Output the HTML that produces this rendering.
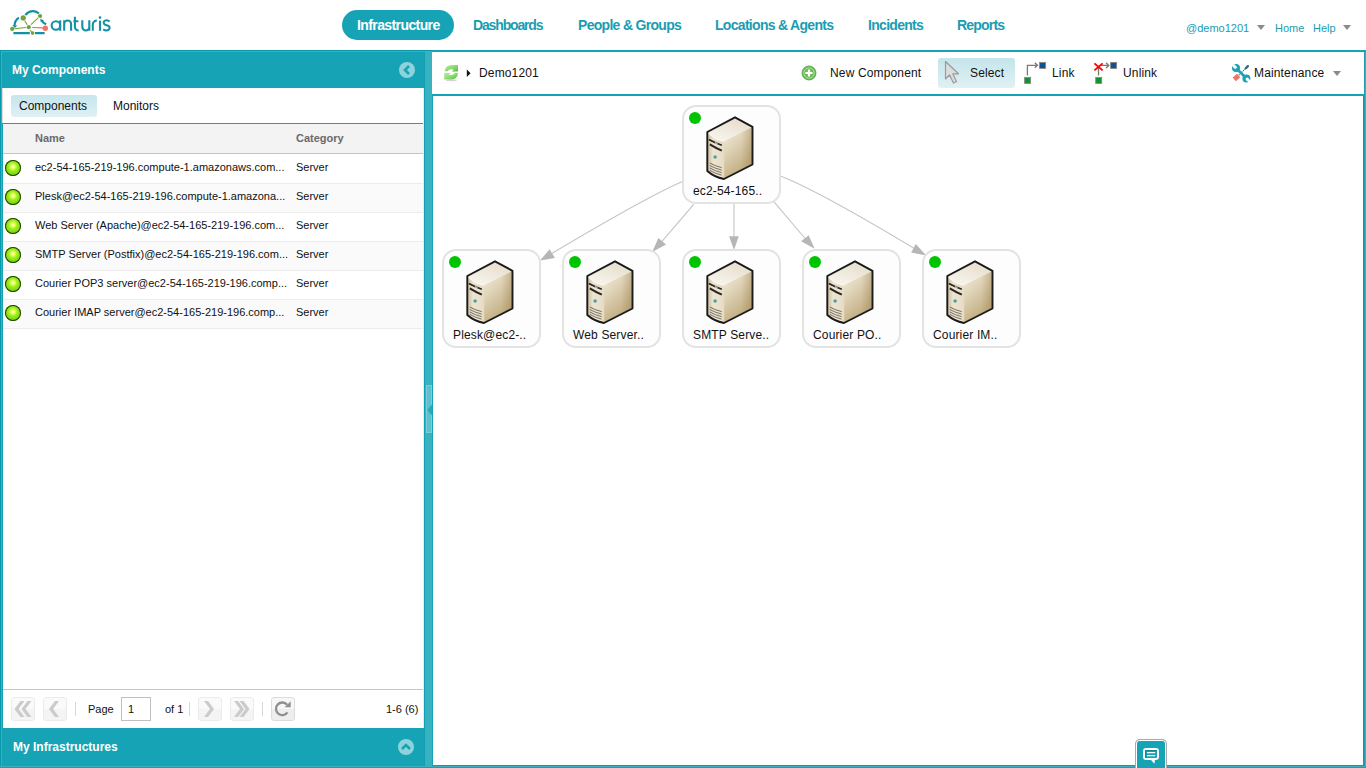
<!DOCTYPE html>
<html><head><meta charset="utf-8">
<style>
*{margin:0;padding:0;box-sizing:border-box}
html,body{width:1366px;height:768px;overflow:hidden;background:#fff;font-family:"Liberation Sans",sans-serif;color:#222}
.a{position:absolute}
.t{position:absolute;white-space:nowrap;line-height:1}
.nav{font-weight:bold;font-size:14px;color:#1a9db2;top:18px;letter-spacing:-0.6px}
.hl{font-size:11px;color:#1a9cb1;top:23px}
.tri{position:absolute;width:0;height:0;border-left:4px solid transparent;border-right:4px solid transparent;border-top:5px solid #8a8a8a}
.teal{background:#16a3b5}
.row{position:absolute;left:3px;width:420px;height:29px;border-bottom:1px solid #ececec}
.row .ball{position:absolute;left:2px;top:5px;width:16px;height:16px;border-radius:50%;
 background:radial-gradient(circle at 50% 42%,#fffbe0 0,#f0ff60 14%,#9cf020 34%,#7ad80e 62%,#4f9a06 86%,#1f3a00 100%);box-shadow:0 0 0 1px #203c00 inset}
.row .nm{position:absolute;left:32px;top:7px;font-size:11px;color:#111;white-space:nowrap;line-height:1}
.row .ct{position:absolute;left:293px;top:7px;font-size:11px;color:#111;line-height:1}
.pbtn{position:absolute;top:697px;width:24px;height:24px;border:1px solid #ebebeb;border-radius:3px;background:linear-gradient(#fafafa 0,#fafafa 50%,#f4f4f4 50%,#f4f4f4 100%)}
.sep{position:absolute;top:702px;width:1px;height:14px;background:#d8d8d8}
.node{position:absolute;width:99px;height:99px;border:2px solid #e3e3e3;border-radius:14px;background:#fdfdfd}
.node .dot{position:absolute;left:5px;top:5px;width:12px;height:12px;border-radius:50%;background:#00c400}
.node svg{position:absolute;left:22px;top:9px}
.node .lb{position:absolute;left:9px;top:78px;text-align:left;letter-spacing:0.15px;font-size:12px;color:#111;line-height:1;white-space:nowrap}
.tb{position:absolute;top:67px;font-size:12px;color:#111;line-height:1;white-space:nowrap;letter-spacing:0.15px}
</style></head>
<body>
<!-- ===== HEADER ===== -->
<svg class="a" style="left:0;top:0" width="120" height="46" viewBox="0 0 120 46">
 <g fill="none" stroke="#1390a5" stroke-width="2.2" stroke-linecap="butt">
  <path d="M25.3 14.9 Q31.8 8.3 38.9 13.4"/>
  <path d="M18.9 17.6 Q14.6 20.5 14.6 25.6"/>
  <path d="M41.6 20 Q42.6 22.9 46.2 24.2"/>
  <path d="M13.4 33.1 H29.8 M35 33.1 H44.6"/>
 </g>
 <path d="M12.2 25 L17.3 25.6 L14.8 28z" fill="#1390a5"/>
 <path d="M40.2 18.4 L43.8 20.8 L40.8 22.2z" fill="#1390a5"/>
 <g stroke="#76a13a" stroke-width="1.1">
  <line x1="24.7" y1="20.8" x2="27.2" y2="24.6"/>
  <line x1="31" y1="24.6" x2="38.2" y2="17.9"/>
  <line x1="14.3" y1="28.7" x2="25.9" y2="27.5"/>
  <line x1="30" y1="30" x2="32.6" y2="33.1"/>
 </g>
 <line x1="32.2" y1="27.5" x2="43" y2="27.9" stroke="#e9705e" stroke-width="1.1"/>
 <g fill="#76a13a">
  <circle cx="23.2" cy="17.9" r="2.6"/><circle cx="40.1" cy="16" r="2.1"/>
  <circle cx="28.8" cy="27.2" r="2.1"/><circle cx="12.2" cy="28.9" r="2.1"/>
  <circle cx="32.6" cy="33.1" r="1.8"/>
 </g>
 <circle cx="45.3" cy="28.3" r="2.7" fill="#ee7763"/>
 <g fill="none" stroke="#1591a6" stroke-width="2.1">
  <circle cx="55.9" cy="25.45" r="4.25"/>
  <path d="M60.2 20.3 V30.8"/>
  <path d="M64.2 20.3 V30.8 M64.2 24 A3.45 3.45 0 0 1 71.1 24 V30.8"/>
  <path d="M74.9 16.8 V27 A3.3 3.3 0 0 0 78.6 30.3 M73.4 21.3 H78.4"/>
  <path d="M82.3 20.3 V27 A3.5 3.5 0 0 0 89.3 27 V20.3 M89.3 26 V30.8"/>
  <path d="M92.8 30.8 V24.5 A4 4 0 0 1 96.8 20.6"/>
  <path d="M100 20.6 V30.8"/>
  <path d="M109.6 21.6 Q107.5 19.6 105 20.6 Q102.8 21.8 104.2 23.8 Q105 24.8 107.4 25.5 Q110.6 26.6 109.2 29.2 Q106.6 31.6 103.2 29.4"/>
 </g>
 <circle cx="100" cy="17.6" r="1.3" fill="#1591a6"/>
</svg>

<div class="a teal" style="left:342px;top:10px;width:112px;height:30px;border-radius:15px"></div>
<div class="t nav" style="left:357px;color:#fff">Infrastructure</div>
<div class="t nav" style="left:473px;letter-spacing:-1.15px">Dashboards</div>
<div class="t nav" style="left:578px;letter-spacing:-0.7px">People &amp; Groups</div>
<div class="t nav" style="left:715px;letter-spacing:-0.7px">Locations &amp; Agents</div>
<div class="t nav" style="left:868px;letter-spacing:-0.7px">Incidents</div>
<div class="t nav" style="left:957px;letter-spacing:-0.8px">Reports</div>

<div class="t hl" style="left:1186px">@demo1201</div>
<div class="tri" style="left:1257px;top:25px"></div>
<div class="t hl" style="left:1275px">Home</div>
<div class="t hl" style="left:1313px">Help</div>
<div class="tri" style="left:1343px;top:25px"></div>

<!-- ===== LEFT PANEL ===== -->
<div class="a" style="left:0;top:50px;width:433px;height:718px;background:#16a3b5"></div>
<div class="a" style="left:0;top:50px;width:1px;height:718px;background:#0b98ab"></div>
<div class="a" style="left:0;top:50px;width:433px;height:1px;background:#0b98ab"></div>
<div class="a" style="left:1px;top:51px;width:431px;height:1px;background:#37b1bf"></div>
<div class="a" style="left:1px;top:51px;width:1px;height:717px;background:#37b1bf"></div>
<div class="t" style="left:12px;top:64px;font-size:12px;font-weight:bold;color:#fff">My Components</div>
<div class="a" style="left:399px;top:62px;width:16px;height:16px;border-radius:50%;background:#8ed3dc"></div>
<svg class="a" style="left:399px;top:62px" width="16" height="16"><path d="M10 4 L6 8 L10 12" fill="none" stroke="#16a3b5" stroke-width="2.6"/></svg>

<div class="a" style="left:2px;top:88px;width:422px;height:640px;background:#fff;border-left:1px solid #e6dede;border-right:1px solid #f2e8e6"></div>
<div class="a" style="left:424px;top:52px;width:1px;height:714px;background:#11a0b2"></div>
<div class="a" style="left:11px;top:95px;width:86px;height:22px;border-radius:3px;background:linear-gradient(#c6e6ec,#dff1f4)"></div>
<div class="t" style="left:19px;top:100px;font-size:12px;color:#111">Components</div>
<div class="t" style="left:113px;top:100px;font-size:12px;color:#111">Monitors</div>
<div class="a" style="left:2px;top:123px;width:421px;height:1px;background:#16a3b5"></div>
<div class="a" style="left:2px;top:123px;width:1px;height:605px;background:#16a3b5"></div>
<div class="a" style="left:3px;top:124px;width:420px;height:30px;background:#f3f3f3;border-bottom:1px solid #c4c4c4"></div>
<div class="t" style="left:35px;top:133px;font-size:11px;font-weight:bold;color:#6a6a6a">Name</div>
<div class="t" style="left:296px;top:133px;font-size:11px;font-weight:bold;color:#6a6a6a">Category</div>

<div class="row" style="top:155px;background:#fff"><div class="ball"></div><div class="nm">ec2-54-165-219-196.compute-1.amazonaws.com...</div><div class="ct">Server</div></div>
<div class="row" style="top:184px;background:#fafafa"><div class="ball"></div><div class="nm">Plesk@ec2-54-165-219-196.compute-1.amazona...</div><div class="ct">Server</div></div>
<div class="row" style="top:213px;background:#fff"><div class="ball"></div><div class="nm">Web Server (Apache)@ec2-54-165-219-196.com...</div><div class="ct">Server</div></div>
<div class="row" style="top:242px;background:#fafafa"><div class="ball"></div><div class="nm">SMTP Server (Postfix)@ec2-54-165-219-196.com...</div><div class="ct">Server</div></div>
<div class="row" style="top:271px;background:#fff"><div class="ball"></div><div class="nm">Courier POP3 server@ec2-54-165-219-196.comp...</div><div class="ct">Server</div></div>
<div class="row" style="top:300px;background:#fafafa"><div class="ball"></div><div class="nm">Courier IMAP server@ec2-54-165-219-196.comp...</div><div class="ct">Server</div></div>

<!-- paging -->
<div class="a" style="left:3px;top:689px;width:420px;height:1px;background:#c4c4c4"></div>
<div class="pbtn" style="left:11px"></div>
<div class="pbtn" style="left:43px"></div>
<div class="sep" style="left:75px"></div>
<div class="t" style="left:88px;top:704px;font-size:11px;color:#111">Page</div>
<div class="a" style="left:121px;top:697px;width:30px;height:24px;border:1px solid #c0c0c0;background:#fff"></div>
<div class="t" style="left:128px;top:704px;font-size:11px;color:#111">1</div>
<div class="t" style="left:165px;top:704px;font-size:11px;color:#111">of 1</div>
<div class="sep" style="left:189px"></div>
<div class="pbtn" style="left:198px"></div>
<div class="pbtn" style="left:230px"></div>
<div class="sep" style="left:262px"></div>
<div class="pbtn" style="left:271px;border-color:#dcdcdc;background:linear-gradient(#f7f7f7 0,#f7f7f7 50%,#eeeeee 50%,#eeeeee 100%)"></div>
<svg class="a" style="left:0;top:690px" width="300" height="38">
 <g fill="#cbcbcb">
  <path d="M20.5 11 h4 l-6 8 l6 8 h-4 l-6 -8z"/><path d="M27.5 11 h4 l-6 8 l6 8 h-4 l-6 -8z"/>
  <path d="M55 11 h4 l-6 8 l6 8 h-4 l-6 -8z"/>
  <path d="M204 11 h4 l6 8 l-6 8 h-4 l6 -8z"/>
  <path d="M234 11 h4 l6 8 l-6 8 h-4 l6 -8z"/><path d="M239.5 11 h4 l6 8 l-6 8 h-4 l6 -8z"/>
 </g>
 <path d="M287.46 22.41 A6.3 6.3 0 1 1 287.1 14.75" fill="none" stroke="#8f8f8f" stroke-width="2.3"/>
 <path d="M290.7 11.2 L290.7 17.3 L284.6 17.3z" fill="#8f8f8f"/>
</svg>
<div class="t" style="left:386px;top:704px;font-size:11px;color:#111">1-6 (6)</div>

<div class="t" style="left:13px;top:741px;font-size:12px;font-weight:bold;color:#fff">My Infrastructures</div>
<div class="a" style="left:398px;top:739px;width:16px;height:16px;border-radius:50%;background:#8ed3dc"></div>
<svg class="a" style="left:398px;top:739px" width="16" height="16"><path d="M4 10 L8 6 L12 10" fill="none" stroke="#16a3b5" stroke-width="2.6"/></svg>



<!-- splitter -->
<div class="a" style="left:425px;top:51px;width:7px;height:716px;background:#38b1c0"></div>
<div class="a" style="left:426px;top:385px;width:6px;height:48px;background:#5ec0cc;border:1px solid #7ccdd7"></div>
<svg class="a" style="left:426px;top:404px" width="6" height="12"><path d="M6 0.5 L1.2 6 L6 11.5z" fill="#2aa8b9"/></svg>

<!-- ===== RIGHT PANEL ===== -->
<div class="a" style="left:432px;top:50px;width:934px;height:718px;background:#16a3b5"></div>
<div class="a" style="left:432px;top:52px;width:932px;height:42px;background:#fff"></div>
<div class="a" style="left:433px;top:96px;width:930px;height:669px;background:#fff"></div>

<!-- toolbar -->
<svg class="a" style="left:443px;top:64px" width="17" height="18" viewBox="0 0 17 18">
 <defs><linearGradient id="gr" x1="0" y1="0" x2="1" y2="1"><stop offset="0" stop-color="#b4ecaa"/><stop offset="0.5" stop-color="#8edc6e"/><stop offset="1" stop-color="#4cc03a"/></linearGradient></defs>
 <ellipse cx="8.3" cy="16.3" rx="5.5" ry="0.9" fill="#d6d2d8"/>
 <path d="M1.6 7.2 Q2.6 1 8.8 1 H15 V7.5 H8.7 L10.8 5.5 Q9.8 5.3 8.5 5.3 Q5.6 5.3 4.7 7.2 Z" fill="url(#gr)"/>
 <path d="M15.2 9 Q14.2 15.6 8 15.6 H1.2 V9 H7.4 L5.6 10.9 Q6.6 11.1 8 11.1 Q10.8 11.1 11.8 9 Z" fill="url(#gr)"/>
</svg>
<svg class="a" style="left:466px;top:69px" width="6" height="9"><path d="M0.8 0.6 L4.6 4.3 L0.8 8.1z" fill="#111"/></svg>
<div class="tb" style="left:479px">Demo1201</div>

<svg class="a" style="left:801px;top:65px" width="16" height="16">
 <circle cx="8" cy="8" r="7" fill="#6cbd5a" stroke="#4f9a3c" stroke-width="0.8"/>
 <circle cx="8" cy="8" r="5.2" fill="none" stroke="#b8e3ac" stroke-width="0.8"/>
 <path d="M8 4.5 V11.5 M4.5 8 H11.5" stroke="#fff" stroke-width="2.2"/>
</svg>
<div class="tb" style="left:830px">New Component</div>

<div class="a" style="left:938px;top:58px;width:77px;height:30px;border-radius:3px;background:linear-gradient(#c3e5eb,#e0f1f4)"></div>
<svg class="a" style="left:944px;top:60px" width="18" height="25">
 <path d="M1.5 1.5 L1.5 19 L5.5 15 L9.5 23 L12.5 21.5 L8.8 13.8 L14.5 13.8z" fill="#dcdcdc" stroke="#9a9a9a" stroke-width="1.2" stroke-linejoin="round"/>
</svg>
<div class="tb" style="left:970px">Select</div>

<svg class="a" style="left:1022px;top:60px" width="28" height="26">
 <path d="M5.4 15.5 V5.3 H15.2" fill="none" stroke="#7a7a7a" stroke-width="1.3"/>
 <path d="M12.8 2.8 L15.4 5.3 L12.8 7.8" fill="none" stroke="#7a7a7a" stroke-width="1.4"/>
 <rect x="2.6" y="17.4" width="6" height="6" fill="#0e9530" stroke="#8c8782" stroke-width="0.9"/>
 <rect x="17.6" y="2.4" width="6" height="6" fill="#0b5294" stroke="#8c8782" stroke-width="0.9"/>
</svg>
<div class="tb" style="left:1052px">Link</div>

<svg class="a" style="left:1091px;top:60px" width="30" height="26">
 <path d="M7.5 6.5 V15.5 M10 5.4 H17.5" fill="none" stroke="#7a7a7a" stroke-width="1.3"/>
 <path d="M15.1 2.8 L17.7 5.4 L15.1 8" fill="none" stroke="#7a7a7a" stroke-width="1.4"/>
 <path d="M3.4 3.4 L11.6 10.4 M11.6 3.4 L3.4 10.4" stroke="#ff0000" stroke-width="1.9"/>
 <rect x="4.7" y="17.4" width="6" height="6" fill="#0e9530" stroke="#8c8782" stroke-width="0.9"/>
 <rect x="19.6" y="2.4" width="6" height="6" fill="#0b5294" stroke="#8c8782" stroke-width="0.9"/>
</svg>
<div class="tb" style="left:1123px">Unlink</div>

<svg class="a" style="left:1228px;top:60px" width="28" height="26" viewBox="0 0 28 26">
 <path d="M6.3 19.5 L10.6 15.5" stroke="#f07462" stroke-width="4.8"/>
 <path d="M10.8 15.2 L17.6 8.4" stroke="#2d6c78" stroke-width="1.1" stroke-dasharray="1.2 0.8"/>
 <path d="M17.8 8.2 L19.9 6.1" stroke="#2c6a76" stroke-width="2.3" stroke-linecap="round"/>
 <path d="M8.5 8.5 L18 18" stroke="#1aa2b8" stroke-width="2.6"/>
 <circle cx="8" cy="8" r="4" fill="#1aa2b8"/>
 <circle cx="18.4" cy="18.4" r="4" fill="#1aa2b8"/>
 <circle cx="7.3" cy="7.3" r="1.5" fill="#fff"/>
 <path d="M7.3 7.3 L3 3" stroke="#fff" stroke-width="2.8"/>
 <circle cx="19.1" cy="19.1" r="1.5" fill="#fff"/>
 <path d="M19.1 19.1 L23.4 23.4" stroke="#fff" stroke-width="2.8"/>
</svg>
<div class="tb" style="left:1254px">Maintenance</div>
<div class="tri" style="left:1333px;top:71px"></div>

<!-- ===== DIAGRAM ===== -->
<svg width="0" height="0" style="position:absolute">
 <defs>
  <linearGradient id="sf" x1="0" y1="0" x2="0.35" y2="1"><stop offset="0" stop-color="#f3eee4"/><stop offset="0.4" stop-color="#e3d8be"/><stop offset="1" stop-color="#c2ad80"/></linearGradient>
  <linearGradient id="sh" x1="0" y1="0" x2="1" y2="0"><stop offset="0" stop-color="#8a6a30" stop-opacity="0"/><stop offset="0.6" stop-color="#8a6a30" stop-opacity="0.05"/><stop offset="1" stop-color="#8a6a30" stop-opacity="0.35"/></linearGradient>
  <linearGradient id="tf" x1="0" y1="1" x2="0.6" y2="0"><stop offset="0" stop-color="#faf7f1"/><stop offset="1" stop-color="#e7dfcd"/></linearGradient>
  <linearGradient id="ff" x1="0" y1="0" x2="1" y2="0"><stop offset="0" stop-color="#cdbf9f"/><stop offset="0.35" stop-color="#ece4d2"/><stop offset="1" stop-color="#e6dcc5"/></linearGradient>
  <symbol id="srv" viewBox="0 0 48 64">
   <path d="M18 25 L46.5 10.5 L46.5 48.5 L18 63z" fill="url(#sf)"/>
   <path d="M18 25 L46.5 10.5 L46.5 48.5 L18 63z" fill="url(#sh)"/>
   <path d="M1.3 16 L29 1.3 L46.5 10.8 L18.2 25 Q9 23.5 1.3 16z" fill="url(#tf)"/>
   <path d="M1.3 16 Q9 23.5 18.2 25 L18.2 63 Q8 61 1.3 55z" fill="url(#ff)"/>
   <path d="M1.5 16.6 Q9 24 18.2 25.4" stroke="#fffdf8" stroke-width="1" fill="none"/>
   <path d="M1.3 16 L29 1.3 L46.5 10.8 L46.5 48.5 L18 63 Q8 61 1.3 55z" fill="none" stroke="#1a1a1a" stroke-width="1.9" stroke-linejoin="round"/>
   <path d="M2.8 23.5 Q9.5 27 15.8 29.2" stroke="#262420" stroke-width="1.6" fill="none"/>
   <path d="M9 26.6 L11.5 27.6" stroke="#fff" stroke-width="0.9"/>
   <path d="M3.8 28.4 Q10 32.2 15.8 34.6" stroke="#262420" stroke-width="2" fill="none"/>
   <circle cx="9.1" cy="41" r="1.5" fill="#3d9a9a" stroke="#7aa" stroke-width="0.5"/>
   <path d="M3.8 47 Q10 50.3 15.6 51.6 M3.8 49.5 Q10 52.8 15.6 54.1 M3.8 52 Q10 55.3 15.6 56.6 M3.8 54.5 Q10 57.8 15.6 59.1" stroke="#5b5448" stroke-width="0.8" fill="none"/>
  </symbol>
 </defs>
</svg>

<svg class="a" style="left:0;top:0" width="1000" height="300">
 <g stroke="#c4c4c4" stroke-width="1.1" fill="none">
  <path d="M683.1 181.35 Q648.55 195.93 548 255.8"/>
  <path d="M693.7 204.4 L662.2 241.2"/>
  <path d="M734 203 V237"/>
  <path d="M773.2 200.9 L804.85 238.25"/>
  <path d="M781 176.25 Q818.6 190.9 916 249.5"/>
 </g>
 <g fill="#b6b6b6">
  <path d="M540 260.5 L549.6 249.3 L554.9 257.9z"/>
  <path d="M652.2 252.1 L658.4 237.9 L666 244.5z"/>
  <path d="M734 250 L729.1 236.2 L738.8 236.2z"/>
  <path d="M814.7 248.8 L801.1 241.3 L808.6 235.2z"/>
  <path d="M926.2 255.5 L915.8 244.1 L911.2 252.5z"/>
 </g>
</svg>

<div class="node" style="left:682px;top:105px"><div class="dot"></div><svg width="48" height="64"><use href="#srv"/></svg><div class="lb">ec2-54-165..</div></div>
<div class="node" style="left:442px;top:249px"><div class="dot"></div><svg width="48" height="64"><use href="#srv"/></svg><div class="lb">Plesk@ec2-..</div></div>
<div class="node" style="left:562px;top:249px"><div class="dot"></div><svg width="48" height="64"><use href="#srv"/></svg><div class="lb">Web Server..</div></div>
<div class="node" style="left:682px;top:249px"><div class="dot"></div><svg width="48" height="64"><use href="#srv"/></svg><div class="lb">SMTP Serve..</div></div>
<div class="node" style="left:802px;top:249px"><div class="dot"></div><svg width="48" height="64"><use href="#srv"/></svg><div class="lb">Courier PO..</div></div>
<div class="node" style="left:922px;top:249px"><div class="dot"></div><svg width="48" height="64"><use href="#srv"/></svg><div class="lb">Courier IM..</div></div>

<div class="a" style="left:433px;top:765px;width:930px;height:1px;background:#0c9aad"></div>
<div class="a" style="left:1363px;top:96px;width:1px;height:670px;background:#0c9aad"></div>
<div class="a" style="left:1365px;top:52px;width:1px;height:715px;background:#37b1bf"></div>
<div class="a" style="left:0;top:766px;width:1366px;height:1px;background:#37b1bf"></div>
<div class="a" style="left:0;top:767px;width:1366px;height:1px;background:#13a1b3"></div>
<!-- chat tab -->
<div class="a" style="left:1135px;top:739px;width:32px;height:29px;background:#16a3b5;border:1px solid #a9a9a9;border-bottom:none;border-radius:5px 5px 0 0;box-shadow:inset 1px 0 0 #fff,inset -1px 0 0 #fff,inset 0 1px 0 #fff"></div>
<svg class="a" style="left:1141px;top:746px" width="20" height="20">
 <rect x="3" y="3" width="14" height="10" rx="2.2" fill="#16a3b5" stroke="#fff" stroke-width="2"/>
 <path d="M4 4.6 H16 M4.5 4 V12" stroke="#0c8797" stroke-width="1"/>
 <path d="M9.6 13.6 L14 13.6 L13.4 17.8z" fill="#fff"/>
 <path d="M6 6.6 H14.2 M6 9.6 H14.2" stroke="#fff" stroke-width="1.1"/>
</svg>
</body></html>
